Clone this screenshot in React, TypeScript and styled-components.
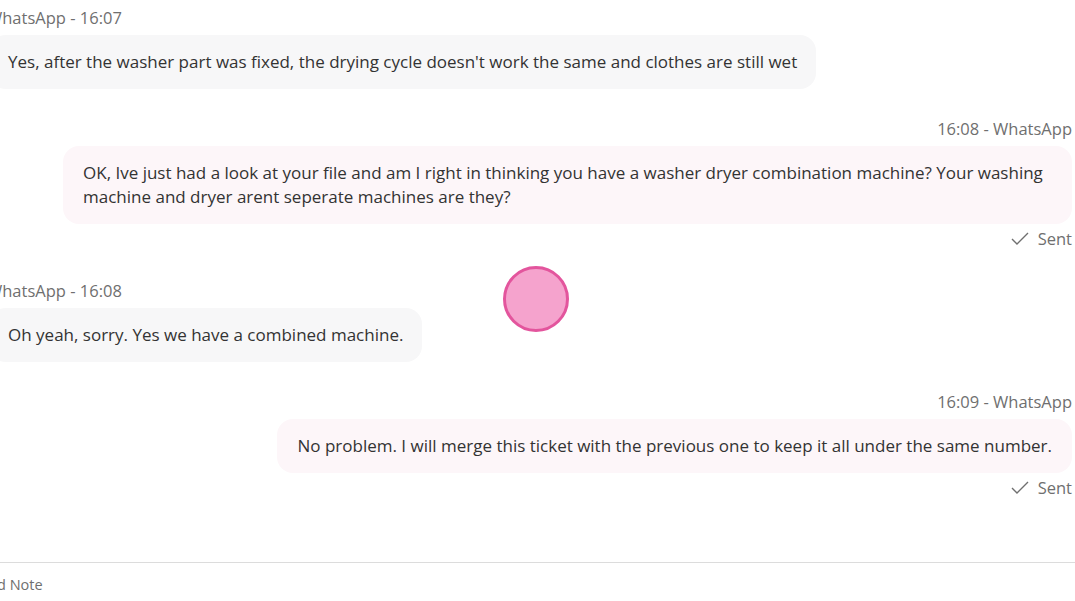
import React from "react";
import styled, { createGlobalStyle } from "styled-components";

const Global = createGlobalStyle`
  html, body { margin: 0; padding: 0; background: #ffffff; overflow: hidden; }
  body { font-family: "Open Sans", "Noto Sans", "Liberation Sans", sans-serif; color: #333333; }
`;

const Page = styled.div`
  position: relative;
  width: 1085px;
  height: 601px;
  margin-left: -10px;
  display: flex;
  flex-direction: column;
`;

const Thread = styled.div`
  flex: 1;
  display: flex;
  flex-direction: column;
  padding: 8px 3px 0 0;
`;

const Group = styled.div<{ $out?: boolean }>`
  display: flex;
  flex-direction: column;
  align-items: ${(p) => (p.$out ? "flex-end" : "flex-start")};
  margin-bottom: 30px;
`;

const Meta = styled.div<{ $out?: boolean }>`
  font-size: 16.5px;
  line-height: 20px;
  color: #6f6f6f;
  margin-bottom: 7px;
  margin-left: ${(p) => (p.$out ? "0" : "-3px")};
`;

const Bubble = styled.div<{ $out?: boolean }>`
  max-width: 1009px;
  box-sizing: border-box;
  padding: 15px ${(p) => (p.$out ? "20px" : "19px")} 15px ${(p) => (p.$out ? "20px" : "18px")};
  border-radius: 16px;
  background: ${(p) => (p.$out ? "#fdf6f9" : "#f7f7f8")};
  font-size: 17px;
  line-height: 24px;
  color: #333333;
`;

const Status = styled.div`
  display: flex;
  align-items: center;
  gap: 9px;
  margin-top: 5px;
  margin-bottom: 2px;
  font-size: 16.5px;
  line-height: 20px;
  color: #6f6f6f;
`;

const Composer = styled.div`
  border-top: 1px solid #dcdcdc;
  height: 39px;
  display: flex;
  align-items: center;
  padding-top: 4px;
  box-sizing: border-box;
`;

const Tab = styled.div`
  margin-left: -11px;
  font-size: 14.5px;
  color: #6f6f6f;
`;

const Cursor = styled.div`
  position: absolute;
  left: 513px;
  top: 266px;
  width: 60px;
  height: 60px;
  border-radius: 50%;
  background: #f5a3cd;
  border: 3px solid #e3559d;
`;

const Check = () => (
  <svg width="18" height="14" viewBox="0 0 18 14">
    <polyline points="1,7 6,12 17,1" fill="none" stroke="#6f6f6f" strokeWidth="1.4" />
  </svg>
);

const SentStatus = () => (
  <Status>
    <Check />
    <span>Sent</span>
  </Status>
);

export default function App() {
  return (
    <>
      <Global />
      <Page>
        <Thread>
          <Group>
            <Meta>WhatsApp - 16:07</Meta>
            <Bubble>
              Yes, after the washer part was fixed, the drying cycle doesn't work the same and clothes are still wet
            </Bubble>
          </Group>
          <Group $out>
            <Meta $out>16:08 - WhatsApp</Meta>
            <Bubble $out>
              OK, Ive just had a look at your file and am I right in thinking you have a washer dryer combination machine? Your washing machine and dryer arent seperate machines are they?
            </Bubble>
            <SentStatus />
          </Group>
          <Group>
            <Meta>WhatsApp - 16:08</Meta>
            <Bubble>Oh yeah, sorry. Yes we have a combined machine.</Bubble>
          </Group>
          <Group $out>
            <Meta $out>16:09 - WhatsApp</Meta>
            <Bubble $out>
              No problem. I will merge this ticket with the previous one to keep it all under the same number.
            </Bubble>
            <SentStatus />
          </Group>
        </Thread>
        <Composer>
          <Tab>Add Note</Tab>
        </Composer>
        <Cursor />
      </Page>
    </>
  );
}
